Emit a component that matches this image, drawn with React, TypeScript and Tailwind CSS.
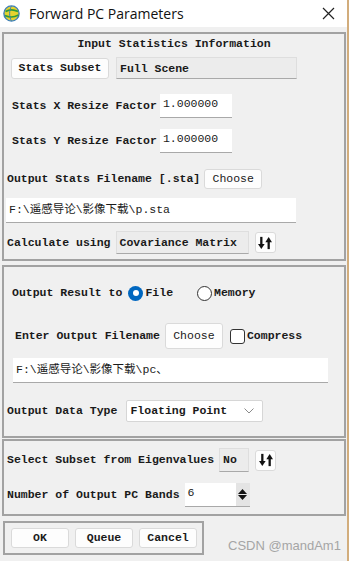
import React from "react";

const label = "font-['Liberation_Mono','Noto_Sans_CJK_SC',monospace] text-[11.5px] font-bold text-[#1a1a1a] whitespace-nowrap leading-none";
const value = "font-['Liberation_Mono','Noto_Sans_CJK_SC',monospace] text-[11.5px] text-[#1a1a1a] whitespace-nowrap leading-none";

const Btn = ({ text, className = "", bold = false }: { text: string; className?: string; bold?: boolean }) => (
	<div className={`bg-[#fdfdfd] border border-[#dadada] rounded-[3px] flex items-center justify-center ${bold ? label : value} ${className}`}>
		{text}
	</div>
);

const SwapIcon = () => (
	<div className="w-[21px] h-[21px] bg-[#fdfdfd] border border-[#dadada] rounded-[3px] flex items-center justify-center">
		<svg width="14" height="14" viewBox="0 0 16 16">
			<rect x="2.5" y="1" width="2.6" height="9" fill="#111" />
			<polygon points="0,9 7.6,9 3.8,14.8" fill="#111" />
			<polygon points="8.4,7 16,7 12.2,1.2" fill="#111" />
			<rect x="10.9" y="6" width="2.6" height="9" fill="#111" />
		</svg>
	</div>
);

const TextBox = ({ text, className = "" }: { text: string; className?: string }) => (
	<div className={`bg-white border-b border-[#a9a9a9] flex px-[3px] ${value} ${className}`}>{text}</div>
);

const GrayBox = ({ text, className = "" }: { text: string; className?: string }) => (
	<div className={`bg-[#ececec] border border-[#dedede] border-b-[#a9a9a9] flex px-[3px] pt-[5px] ${label} ${className}`}>{text}</div>
);

const Globe = () => (
	<svg width="17" height="17" viewBox="0 0 17 17">
		<circle cx="8.5" cy="8.5" r="7.6" fill="#e6d22e" stroke="#3d7fb8" strokeWidth="1.4" />
		<path d="M2.5 6.5 C6 4.5 11 4.5 15 6.5" stroke="#2f9b3c" strokeWidth="1.8" fill="none" />
		<path d="M2 10.5 C6 12.5 11 12.5 15.5 10" stroke="#2f9b3c" strokeWidth="1.6" fill="none" />
		<path d="M8.5 1 C6 5 6 12 8.5 16" stroke="#3d7fb8" strokeWidth="1" fill="none" />
	</svg>
);

export default function App() {
	return (
		<div className="relative w-[349px] h-[561px] bg-[#f0f0f0] border-r-2 border-[#d2ad7c] overflow-hidden flex flex-col">
			{/* title bar */}
			<div className="h-[27px] shrink-0 bg-white flex items-center pl-[3px]">
				<Globe />
				<span className="ml-[9px] font-['Open_Sans',sans-serif] text-[14px] text-[#111] leading-none">Forward PC Parameters</span>
				<svg className="ml-auto mr-[12px]" width="13" height="13" viewBox="0 0 13 13">
					<path d="M1 1 L12 12 M12 1 L1 12" stroke="#222" strokeWidth="1.2" />
				</svg>
			</div>

			<div className="pl-[2px] pr-[1px] pt-[5px] flex flex-col">
				{/* input statistics */}
				<div className="h-[229px] border-2 border-[#a2a2a2] flex flex-col">
					<div className={`mt-[2px] h-[16px] flex items-center justify-center ${label}`}>Input Statistics Information</div>
					<div className="mt-[5px] h-[22px] pl-[7px] flex items-center">
						<Btn text="Stats Subset" bold className="w-[98px] h-[21px]" />
						<GrayBox text="Full Scene" className="ml-[7px] w-[181px] h-[22px] pt-[4px]" />
					</div>
					<div className="mt-[15px] h-[24px] pl-[8px] flex items-center">
						<span className={label}>Stats X Resize Factor</span>
						<TextBox text="1.000000" className="ml-[3px] w-[72px] h-[24px] pt-[4px]" />
					</div>
					<div className="mt-[11px] h-[24px] pl-[8px] flex items-center">
						<span className={label}>Stats Y Resize Factor</span>
						<TextBox text="1.000000" className="ml-[3px] w-[72px] h-[24px] pt-[4px]" />
					</div>
					<div className="mt-[16px] h-[20px] pl-[3px] flex items-center">
						<span className={label}>Output Stats Filename [.sta]</span>
						<Btn text="Choose" className="ml-[4px] w-[58px] h-[20px]" />
					</div>
					<TextBox text="F:\遥感导论\影像下载\p.sta" className="mt-[9px] ml-[2px] w-[290px] h-[25px] items-center" />
					<div className="mt-[8px] h-[23px] pl-[3px] flex items-center">
						<span className={label}>Calculate using</span>
						<GrayBox text="Covariance Matrix" className="ml-[5px] w-[133px] h-[23px] pt-[4px]" />
						<div className="ml-[6px]">
							<SwapIcon />
						</div>
					</div>
				</div>

				{/* output */}
				<div className="mt-[4px] h-[173px] border-2 border-[#a2a2a2] flex flex-col">
					<div className="mt-[16px] h-[20px] pl-[8px] flex items-center">
						<span className={label}>Output Result to</span>
						<div className="ml-[6px] w-[15px] h-[15px] rounded-full bg-[#0067c0] flex items-center justify-center">
							<div className="w-[6px] h-[6px] rounded-full bg-white" />
						</div>
						<span className={`ml-[2px] ${label}`}>File</span>
						<div className="ml-[24px] w-[15px] h-[15px] rounded-full border border-[#333] bg-white" />
						<span className={`ml-[2px] ${label}`}>Memory</span>
					</div>
					<div className="mt-[20px] h-[26px] pl-[11px] flex items-center">
						<span className={label}>Enter Output Filename</span>
						<Btn text="Choose" className="ml-[5px] w-[58px] h-[26px]" />
						<div className="ml-[7px] w-[15px] h-[15px] rounded-[3px] border border-[#333] bg-white" />
						<span className={`ml-[2px] ${label}`}>Compress</span>
					</div>
					<TextBox text="F:\遥感导论\影像下载\pc、" className="mt-[9px] ml-[9px] w-[315px] h-[25px] items-center" />
					<div className="mt-[17px] h-[22px] pl-[3px] flex items-center">
						<span className={label}>Output Data Type</span>
						<div className={`ml-[9px] w-[137px] h-[22px] bg-white border border-[#d6d6d6] rounded-[2px] flex items-center pl-[3px] pr-[8px] ${label}`}>
							Floating Point
							<svg className="ml-auto" width="10" height="6" viewBox="0 0 10 6">
								<path d="M0.5 0.5 L5 5 L9.5 0.5" stroke="#8a8a8a" strokeWidth="1" fill="none" />
							</svg>
						</div>
					</div>
				</div>

				{/* eigenvalues */}
				<div className="mt-[1px] h-[77px] border-2 border-[#a2a2a2] flex flex-col">
					<div className="mt-[7px] h-[24px] pl-[3px] flex items-center">
						<span className={label}>Select Subset from Eigenvalues</span>
						<GrayBox text="No" className="ml-[5px] w-[30px] h-[24px] pt-[4px]" />
						<div className="ml-[6px]">
							<SwapIcon />
						</div>
					</div>
					<div className="mt-[11px] h-[24px] pl-[3px] flex items-center">
						<span className={label}>Number of Output PC Bands</span>
						<div className="ml-[5px] w-[65px] h-[24px] bg-white border-b border-[#a9a9a9] flex">
							<span className={`pl-[3px] pt-[4px] ${value}`}>6</span>
							<div className="ml-auto w-[14px] h-full bg-[#e4e4e4] flex flex-col items-center justify-center gap-[1px]">
								<svg width="9" height="5" viewBox="0 0 9 5"><polygon points="0,5 9,5 4.5,0" fill="#111" /></svg>
								<svg width="9" height="5" viewBox="0 0 9 5"><polygon points="0,0 9,0 4.5,5" fill="#111" /></svg>
							</div>
						</div>
					</div>
				</div>

				{/* buttons */}
				<div className="mt-[5px] ml-[1px] w-[201px] h-[34px] border-2 border-[#a2a2a2] flex pl-[6px] pt-[5px] gap-[6px]">
					<Btn text="OK" bold className="w-[58px] h-[20px]" />
					<Btn text="Queue" bold className="w-[58px] h-[20px]" />
					<Btn text="Cancel" bold className="w-[58px] h-[20px]" />
				</div>
			</div>

			<span className="absolute left-[228px] top-[539px] font-['Liberation_Sans',sans-serif] text-[13px] text-[#a5a5a5] leading-none">CSDN @mandAm1</span>
		</div>
	);
}
